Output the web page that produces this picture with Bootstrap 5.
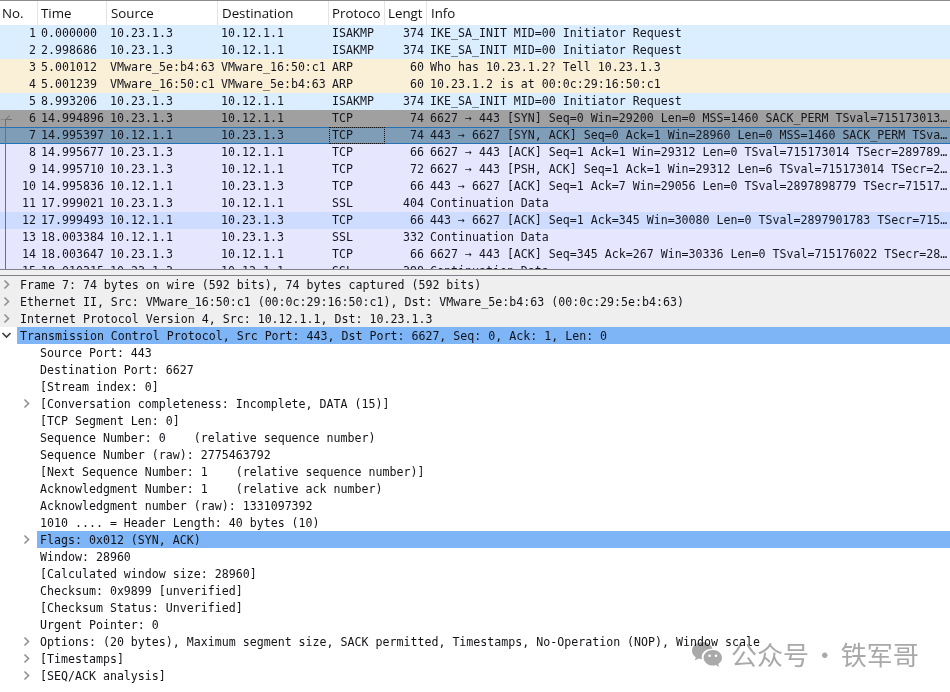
<!DOCTYPE html>
<html lang="en">
<head>
<meta charset="utf-8">
<title>Wireshark</title>
<link href="https://cdn.jsdelivr.net/npm/bootstrap@5.3.0/dist/css/bootstrap.min.css" rel="stylesheet">
<style>
html,body{height:100%;}
body{width:950px;height:692px;overflow:hidden;background:#fff;color:#111;position:relative;font-family:"DejaVu Sans Mono",monospace;font-size:11.62px;line-height:17px;}
.top-edge{height:1px;background:#8c8c90;}
.pkt-pane{height:268px;overflow:hidden;position:relative;background:#fff;}
.pkt-table{table-layout:fixed;width:950px;margin:0;border-collapse:separate;border-spacing:0;color:#111;font-size:11.62px;}
.pkt-table th{height:24px;padding:0 0 0 4px;font-family:"Open Sans","Noto Sans",sans-serif;font-weight:400;font-size:13.3px;line-height:24px;white-space:nowrap;overflow:hidden;border-right:1px solid #e4e4e4;background:#fff;color:#111;}
.pkt-table th:first-child{padding-left:2px;}
.pkt-table th:nth-child(2){padding-left:3px;}
.pkt-table th:nth-child(5),.pkt-table th:nth-child(6){padding-left:3px;}
.pkt-table th:last-child{border-right:0;}
.pkt-table td{height:17px;padding:0 3px;line-height:17px;white-space:nowrap;overflow:hidden;background:var(--rowc);color:#16161e;}
.pkt-table td.num{text-align:right;}
.pkt-table td.first{padding-right:2px;}
.r-isa{--rowc:#daeeff;}
.r-arp{--rowc:#faf0d7;}
.r-tcp{--rowc:#e7e6ff;}
.r-ack{--rowc:#cddcff;}
.r-grey{--rowc:#a0a0a0;}
.r-sel{--rowc:#7f9db7;}
.r-sel td{border-top:1px solid #2472b5;border-bottom:1px solid #2472b5;line-height:15px;}
.pkt-table td.focus-cell{outline:1px dotted #111;outline-offset:-1px;}
.split-band{height:7px;background:#f0f0f0;border-top:1px solid #808088;border-bottom:1px solid #808088;}
.tree-pane{background:#fff;overflow:hidden;color:#121218;}
.tree-row{height:17px;line-height:19px;white-space:pre;}
.tree-row.shade{background:#efefef;}
.indent{width:20px;flex:none;}
.twist{width:17px;height:17px;flex:none;display:flex;align-items:center;}
.twist svg{display:block;}
.tree-label{flex:1 1 auto;padding-left:3px;min-width:0;}
.tree-label.hit{background:#7eb5f7;}
.link-gutter{position:absolute;left:0;top:110px;}
.stamp{position:absolute;left:692px;top:637px;display:flex;align-items:center;gap:9px;color:#a9a9a9;mix-blend-mode:multiply;font-family:"Noto Sans CJK SC",sans-serif;font-size:26px;line-height:34px;word-spacing:-3px;white-space:pre;}
.stamp svg{margin-top:2px;}
</style>
</head>
<body>
<div class="top-edge"></div>
<div class="pkt-pane">
<table class="table table-borderless pkt-table">
<colgroup><col style="width:38px"><col style="width:69px"><col style="width:111px"><col style="width:111px"><col style="width:56px"><col style="width:42px"><col></colgroup>
<thead><tr><th>No.</th><th>Time</th><th>Source</th><th>Destination</th><th>Protoco</th><th>Lengt</th><th>Info</th></tr></thead>
<tbody>
<tr class="r-isa"><td class="num first">1</td><td>0.000000</td><td>10.23.1.3</td><td>10.12.1.1</td><td>ISAKMP</td><td class="num">374</td><td>IKE_SA_INIT MID=00 Initiator Request</td></tr>
<tr class="r-isa"><td class="num first">2</td><td>2.998686</td><td>10.23.1.3</td><td>10.12.1.1</td><td>ISAKMP</td><td class="num">374</td><td>IKE_SA_INIT MID=00 Initiator Request</td></tr>
<tr class="r-arp"><td class="num first">3</td><td>5.001012</td><td>VMware_5e:b4:63</td><td>VMware_16:50:c1</td><td>ARP</td><td class="num">60</td><td>Who has 10.23.1.2? Tell 10.23.1.3</td></tr>
<tr class="r-arp"><td class="num first">4</td><td>5.001239</td><td>VMware_16:50:c1</td><td>VMware_5e:b4:63</td><td>ARP</td><td class="num">60</td><td>10.23.1.2 is at 00:0c:29:16:50:c1</td></tr>
<tr class="r-isa"><td class="num first">5</td><td>8.993206</td><td>10.23.1.3</td><td>10.12.1.1</td><td>ISAKMP</td><td class="num">374</td><td>IKE_SA_INIT MID=00 Initiator Request</td></tr>
<tr class="r-grey"><td class="num first">6</td><td>14.994896</td><td>10.23.1.3</td><td>10.12.1.1</td><td>TCP</td><td class="num">74</td><td>6627 → 443 [SYN] Seq=0 Win=29200 Len=0 MSS=1460 SACK_PERM TSval=715173013…</td></tr>
<tr class="r-sel"><td class="num first">7</td><td>14.995397</td><td>10.12.1.1</td><td>10.23.1.3</td><td class="focus-cell">TCP</td><td class="num">74</td><td>443 → 6627 [SYN, ACK] Seq=0 Ack=1 Win=28960 Len=0 MSS=1460 SACK_PERM TSva…</td></tr>
<tr class="r-tcp"><td class="num first">8</td><td>14.995677</td><td>10.23.1.3</td><td>10.12.1.1</td><td>TCP</td><td class="num">66</td><td>6627 → 443 [ACK] Seq=1 Ack=1 Win=29312 Len=0 TSval=715173014 TSecr=289789…</td></tr>
<tr class="r-tcp"><td class="num first">9</td><td>14.995710</td><td>10.23.1.3</td><td>10.12.1.1</td><td>TCP</td><td class="num">72</td><td>6627 → 443 [PSH, ACK] Seq=1 Ack=1 Win=29312 Len=6 TSval=715173014 TSecr=2…</td></tr>
<tr class="r-tcp"><td class="num first">10</td><td>14.995836</td><td>10.12.1.1</td><td>10.23.1.3</td><td>TCP</td><td class="num">66</td><td>443 → 6627 [ACK] Seq=1 Ack=7 Win=29056 Len=0 TSval=2897898779 TSecr=71517…</td></tr>
<tr class="r-tcp"><td class="num first">11</td><td>17.999021</td><td>10.23.1.3</td><td>10.12.1.1</td><td>SSL</td><td class="num">404</td><td>Continuation Data</td></tr>
<tr class="r-ack"><td class="num first">12</td><td>17.999493</td><td>10.12.1.1</td><td>10.23.1.3</td><td>TCP</td><td class="num">66</td><td>443 → 6627 [ACK] Seq=1 Ack=345 Win=30080 Len=0 TSval=2897901783 TSecr=715…</td></tr>
<tr class="r-tcp"><td class="num first">13</td><td>18.003384</td><td>10.12.1.1</td><td>10.23.1.3</td><td>SSL</td><td class="num">332</td><td>Continuation Data</td></tr>
<tr class="r-tcp"><td class="num first">14</td><td>18.003647</td><td>10.23.1.3</td><td>10.12.1.1</td><td>TCP</td><td class="num">66</td><td>6627 → 443 [ACK] Seq=345 Ack=267 Win=30336 Len=0 TSval=715176022 TSecr=28…</td></tr>
<tr class="r-tcp"><td class="num first">15</td><td>18.010315</td><td>10.23.1.3</td><td>10.12.1.1</td><td>SSL</td><td class="num">398</td><td>Continuation Data</td></tr>
</tbody>
</table>
<svg class="link-gutter" width="14" height="160" viewBox="0 0 14 160" aria-hidden="true">
<path d="M0.5 8.5H6" stroke="#8a8a8a" fill="none"/>
<path d="M5.5 8.5H12M5.5 8.5L10 4.5M5.5 8.5V159" stroke="#6f7078" fill="none"/>
</svg>
</div>
<div class="split-band"></div>
<div class="tree-pane">
<div class="tree-row shade d-flex"><span class="twist"><svg width="17" height="17"><path d="M4.5 4.5L8.5 8.5L4.5 12.5" fill="none" stroke="#909090" stroke-width="1.6"/></svg></span><span class="tree-label">Frame 7: 74 bytes on wire (592 bits), 74 bytes captured (592 bits)</span></div>
<div class="tree-row shade d-flex"><span class="twist"><svg width="17" height="17"><path d="M4.5 4.5L8.5 8.5L4.5 12.5" fill="none" stroke="#909090" stroke-width="1.6"/></svg></span><span class="tree-label">Ethernet II, Src: VMware_16:50:c1 (00:0c:29:16:50:c1), Dst: VMware_5e:b4:63 (00:0c:29:5e:b4:63)</span></div>
<div class="tree-row shade d-flex"><span class="twist"><svg width="17" height="17"><path d="M4.5 4.5L8.5 8.5L4.5 12.5" fill="none" stroke="#909090" stroke-width="1.6"/></svg></span><span class="tree-label">Internet Protocol Version 4, Src: 10.12.1.1, Dst: 10.23.1.3</span></div>
<div class="tree-row d-flex"><span class="twist"><svg width="17" height="17"><path d="M2.5 6L6.5 10L10.5 6" fill="none" stroke="#3a3a3a" stroke-width="1.6"/></svg></span><span class="tree-label hit">Transmission Control Protocol, Src Port: 443, Dst Port: 6627, Seq: 0, Ack: 1, Len: 0</span></div>
<div class="tree-row d-flex"><span class="indent"></span><span class="twist"></span><span class="tree-label">Source Port: 443</span></div>
<div class="tree-row d-flex"><span class="indent"></span><span class="twist"></span><span class="tree-label">Destination Port: 6627</span></div>
<div class="tree-row d-flex"><span class="indent"></span><span class="twist"></span><span class="tree-label">[Stream index: 0]</span></div>
<div class="tree-row d-flex"><span class="indent"></span><span class="twist"><svg width="17" height="17"><path d="M4.5 4.5L8.5 8.5L4.5 12.5" fill="none" stroke="#909090" stroke-width="1.6"/></svg></span><span class="tree-label">[Conversation completeness: Incomplete, DATA (15)]</span></div>
<div class="tree-row d-flex"><span class="indent"></span><span class="twist"></span><span class="tree-label">[TCP Segment Len: 0]</span></div>
<div class="tree-row d-flex"><span class="indent"></span><span class="twist"></span><span class="tree-label">Sequence Number: 0    (relative sequence number)</span></div>
<div class="tree-row d-flex"><span class="indent"></span><span class="twist"></span><span class="tree-label">Sequence Number (raw): 2775463792</span></div>
<div class="tree-row d-flex"><span class="indent"></span><span class="twist"></span><span class="tree-label">[Next Sequence Number: 1    (relative sequence number)]</span></div>
<div class="tree-row d-flex"><span class="indent"></span><span class="twist"></span><span class="tree-label">Acknowledgment Number: 1    (relative ack number)</span></div>
<div class="tree-row d-flex"><span class="indent"></span><span class="twist"></span><span class="tree-label">Acknowledgment number (raw): 1331097392</span></div>
<div class="tree-row d-flex"><span class="indent"></span><span class="twist"></span><span class="tree-label">1010 .... = Header Length: 40 bytes (10)</span></div>
<div class="tree-row d-flex"><span class="indent"></span><span class="twist"><svg width="17" height="17"><path d="M4.5 4.5L8.5 8.5L4.5 12.5" fill="none" stroke="#909090" stroke-width="1.6"/></svg></span><span class="tree-label hit">Flags: 0x012 (SYN, ACK)</span></div>
<div class="tree-row d-flex"><span class="indent"></span><span class="twist"></span><span class="tree-label">Window: 28960</span></div>
<div class="tree-row d-flex"><span class="indent"></span><span class="twist"></span><span class="tree-label">[Calculated window size: 28960]</span></div>
<div class="tree-row d-flex"><span class="indent"></span><span class="twist"></span><span class="tree-label">Checksum: 0x9899 [unverified]</span></div>
<div class="tree-row d-flex"><span class="indent"></span><span class="twist"></span><span class="tree-label">[Checksum Status: Unverified]</span></div>
<div class="tree-row d-flex"><span class="indent"></span><span class="twist"></span><span class="tree-label">Urgent Pointer: 0</span></div>
<div class="tree-row d-flex"><span class="indent"></span><span class="twist"><svg width="17" height="17"><path d="M4.5 4.5L8.5 8.5L4.5 12.5" fill="none" stroke="#909090" stroke-width="1.6"/></svg></span><span class="tree-label">Options: (20 bytes), Maximum segment size, SACK permitted, Timestamps, No-Operation (NOP), Window scale</span></div>
<div class="tree-row d-flex"><span class="indent"></span><span class="twist"><svg width="17" height="17"><path d="M4.5 4.5L8.5 8.5L4.5 12.5" fill="none" stroke="#909090" stroke-width="1.6"/></svg></span><span class="tree-label">[Timestamps]</span></div>
<div class="tree-row d-flex"><span class="indent"></span><span class="twist"><svg width="17" height="17"><path d="M4.5 4.5L8.5 8.5L4.5 12.5" fill="none" stroke="#909090" stroke-width="1.6"/></svg></span><span class="tree-label">[SEQ/ACK analysis]</span></div>
</div>
<div class="stamp">
<svg width="30" height="26" viewBox="0 0 30 26" aria-hidden="true">
<path d="M10.5 0C4.7 0 0 3.9 0 8.7c0 2.7 1.5 5 3.8 6.6L2.8 18.6l3.8-2c1.1.4 2.2.6 3.4.6-.2-.7-.3-1.3-.3-2 0-4.7 4.4-8.4 9.8-8.4h1C19.4 2.8 15.3 0 10.5 0z" fill="#a9a9a9"/>
<path d="M30 15.8c0-4.3-4.1-7.8-9.2-7.8s-9.2 3.5-9.2 7.8 4.1 7.8 9.2 7.8c1 0 2-.1 3-.5l3.2 1.9-.8-2.9c2.4-1.4 3.8-3.7 3.8-6.3z" fill="#a9a9a9"/>
<circle cx="17.6" cy="13.8" r="1.3" fill="#fff"/><circle cx="24" cy="13.8" r="1.3" fill="#fff"/>
</svg>
<span>公众号 · 铁军哥</span>
</div>
<script src="https://cdn.jsdelivr.net/npm/bootstrap@5.3.0/dist/js/bootstrap.bundle.min.js"></script>
</body>
</html>
